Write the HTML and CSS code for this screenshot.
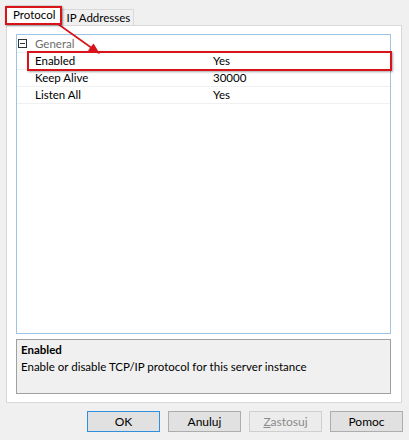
FILE: index.html
```html
<!DOCTYPE html>
<html lang="en">
<head>
  <meta charset="UTF-8" />
  <title>Protocol Properties</title>
  <link rel="stylesheet" href="styles.css">
</head>
<body>
  <div class="dialog">
    <div class="tabs">
      <div class="tab active">Protocol</div>
      <div class="tab">IP Addresses</div>
    </div>

    <div class="panel">
      <div class="grid">
        <div class="row category">
          <span class="toggle"></span>
          <span class="name">General</span>
        </div>
        <div class="row marked">
          <span class="name">Enabled</span>
          <span class="value">Yes</span>
        </div>
        <div class="row">
          <span class="name">Keep Alive</span>
          <span class="value">30000</span>
        </div>
        <div class="row">
          <span class="name">Listen All</span>
          <span class="value">Yes</span>
        </div>
      </div>

      <div class="help">
        <div class="help-title">Enabled</div>
        <div class="help-text">Enable or disable TCP/IP protocol for this server instance</div>
      </div>
    </div>

    <div class="buttons">
      <button class="default">OK</button>
      <button>Anuluj</button>
      <button disabled><u>Z</u>astosuj</button>
      <button>Pomoc</button>
    </div>

    <!-- annotation arrow from the tab to the marked row -->
    <svg class="arrow" width="409" height="440" viewBox="0 0 409 440">
      <line x1="58" y1="24" x2="96" y2="51" stroke="#d9131a" stroke-width="1.6" />
      <polygon points="100,54 88,50.5 93.5,43.5" fill="#d9131a" />
    </svg>
  </div>
</body>
</html>
```

FILE: styles.css
```css
* {
  box-sizing: border-box;
}
body {
  margin: 0;
  background: #f0f0f0;
  font-family: Lato, 'Noto Sans', sans-serif;
  font-size: 11.5px;
  color: #000;
}
.dialog {
  position: relative;
  width: 409px;
  height: 440px;
  padding: 5px 7px 0 6px;
}
.tabs {
  display: flex;
  align-items: flex-end;
  height: 20px;
}
.tab {
  height: 16px;
  line-height: 15px;
  padding: 0 3px;
  border: 1px solid #d9d9d9;
  border-bottom: none;
  background: #f0f0f0;
}
.tab.active {
  position: relative;
  height: 20px;
  line-height: 18px;
  padding: 0 6px;
  background: #fff;
  z-index: 1;
}
.tab.active::after {
  content: '';
  position: absolute;
  left: -2px;
  top: 0;
  right: -1px;
  bottom: 0;
  border: 2px solid #d9131a;
  box-shadow: 1px 1px 2px rgba(0,0,0,0.35);
}
.panel {
  height: 378px;
  padding: 8px 10px 8px 9px;
  background: #fff;
  border: 1px solid #d9d9d9;
  display: flex;
  flex-direction: column;
  gap: 5px;
}
.grid {
  height: 300px;
  border: 1px solid #9fc3e3;
  padding-top: 1px;
}
.row {
  position: relative;
  display: flex;
  height: 17px;
  line-height: 16px;
  border-bottom: 1px solid #f0f0f0;
}
.row .name {
  width: 196px;
  padding-left: 18px;
}
.row .value {
  flex: 1;
}
.category .name {
  padding-left: 8px;
  color: #6d6d6d;
}
.toggle {
  position: relative;
  width: 9px;
  height: 9px;
  margin: 3px 0 0 1px;
  border: 1px solid #333;
}
.toggle::after {
  content: '';
  position: absolute;
  left: 1px;
  right: 1px;
  top: 3px;
  height: 1px;
  background: #333;
}
.marked::after {
  content: '';
  position: absolute;
  left: 10px;
  right: -2px;
  top: -2px;
  bottom: -2px;
  border: 2px solid #d9131a;
  box-shadow: 1px 1px 2px rgba(0,0,0,0.35);
}
.help {
  height: 55px;
  padding: 1px 4px;
  background: #f0f0f0;
  border: 1px solid #a0a0a0;
  line-height: 17px;
}
.help-title {
  font-weight: bold;
}
.buttons {
  display: flex;
  justify-content: flex-end;
  gap: 8px;
  margin-top: 8px;
  margin-right: -1px;
}
button {
  width: 73px;
  height: 21px;
  padding: 0;
  font-family: inherit;
  font-size: 12px;
  color: #000;
  background: #e1e1e1;
  border: 1px solid #adadad;
}
button.default {
  border-color: #2f8fdf;
}
button:disabled {
  color: #8a8a8a;
  background: #ececec;
  border-color: #cfcfcf;
}
.arrow {
  position: absolute;
  left: 0;
  top: 0;
  pointer-events: none;
}
```
